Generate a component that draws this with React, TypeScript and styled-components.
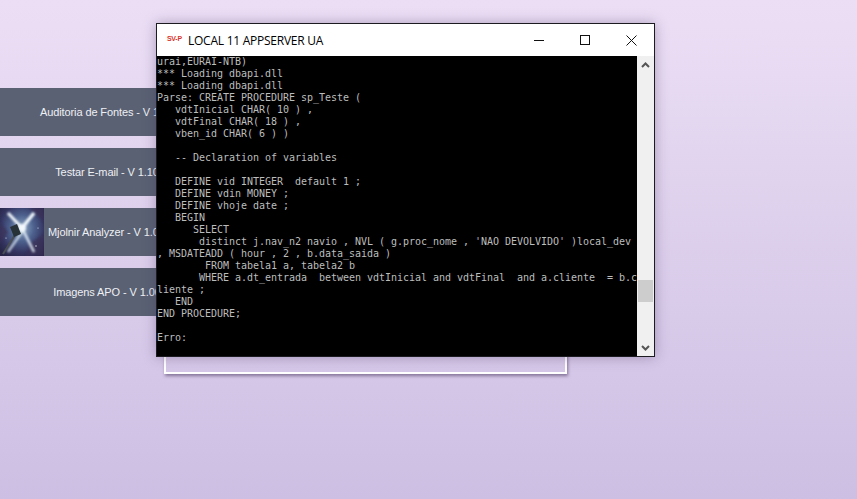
import React from "react";
import styled, { createGlobalStyle } from "styled-components";

const Global = createGlobalStyle`
  html, body { margin: 0; padding: 0; height: 100%; }
  body {
    min-height: 499px;
    overflow: hidden;
    background: linear-gradient(180deg, #ecdff5 0%, #e2d5ef 30%, #cdbfe3 100%);
    font-family: "Liberation Sans", Arial, sans-serif;
  }
`;

const Page = styled.div`
  position: relative;
  width: 857px;
  height: 499px;
  overflow: hidden;
`;

const Menu = styled.nav`
  display: flex;
  flex-direction: column;
  gap: 12px;
  padding-top: 88px;
  width: 214px;
`;

const MenuButton = styled.div`
  display: flex;
  align-items: center;
  justify-content: center;
  height: 48px;
  background: #5a6173;
  color: #eef0f4;
  font-size: 11px;
  letter-spacing: -0.1px;
  white-space: nowrap;
`;

const IconMenuButton = styled(MenuButton)`
  justify-content: flex-start;
  gap: 4px;
`;

const Backdrop = styled.div`
  position: absolute;
  left: 164px;
  top: 300px;
  width: 399px;
  height: 72px;
  border: 2px solid #fff;
  border-top: 0;
  box-shadow: 1px 2px 3px rgba(70, 50, 90, 0.55);
`;

const Win = styled.section`
  position: absolute;
  left: 156px;
  top: 23px;
  width: 497px;
  height: 332px;
  display: flex;
  flex-direction: column;
  border: 1px solid #1c1c20;
  background: #fff;
  box-shadow: 0 0 12px rgba(60, 40, 90, 0.35);
`;

const TitleBar = styled.header`
  display: flex;
  align-items: center;
  height: 32px;
  flex: none;
  padding-left: 10px;
  background: #fff;
`;

const Logo = styled.span`
  width: 16px;
  margin-right: 5px;
  margin-top: -4px;
  color: #d9342b;
  font-size: 7px;
  font-weight: 700;
  letter-spacing: -0.3px;
  white-space: nowrap;
`;

const Title = styled.h1`
  flex: 1;
  margin: 0;
  font-family: "Open Sans", "Noto Sans", sans-serif;
  font-size: 12px;
  font-weight: 400;
  letter-spacing: -0.25px;
  color: #000;
`;

const WinButton = styled.button`
  width: 46px;
  height: 32px;
  padding: 0;
  border: 0;
  background: transparent;
  display: flex;
  align-items: center;
  justify-content: center;
`;

const Body = styled.div`
  flex: 1;
  display: flex;
  min-height: 0;
`;

const Consoleout = styled.pre`
  flex: 1;
  margin: 0;
  padding: 0;
  background: #000;
  color: #bdbdbd;
  font-family: "DejaVu Sans Mono", "Liberation Mono", monospace;
  font-size: 10px;
  letter-spacing: -0.02px;
  line-height: 12px;
  overflow: hidden;
  white-space: pre;
`;

const Scroll = styled.div`
  flex: none;
  width: 17px;
  display: flex;
  flex-direction: column;
  background: #f0f0f0;
`;

const Arrow = styled.div`
  flex: none;
  height: 17px;
  display: flex;
  align-items: center;
  justify-content: center;
`;

const Track = styled.div`
  flex: 1;
  display: flex;
  flex-direction: column;
  justify-content: flex-end;
  padding-bottom: 37px;
`;

const Thumb = styled.div`
  height: 22px;
  margin: 0 1px;
  background: #cdcdcd;
`;

const lines = `urai,EURAI-NTB)
*** Loading dbapi.dll
*** Loading dbapi.dll
Parse: CREATE PROCEDURE sp_Teste (
   vdtInicial CHAR( 10 ) ,
   vdtFinal CHAR( 18 ) ,
   vben_id CHAR( 6 ) )

   -- Declaration of variables

   DEFINE vid INTEGER  default 1 ;
   DEFINE vdin MONEY ;
   DEFINE vhoje date ;
   BEGIN
      SELECT
       distinct j.nav_n2 navio , NVL ( g.proc_nome , 'NAO DEVOLVIDO' )local_dev
, MSDATEADD ( hour , 2 , b.data_saida )
        FROM tabela1 a, tabela2 b
       WHERE a.dt_entrada  between vdtInicial and vdtFinal  and a.cliente  = b.c
liente ;
   END
END PROCEDURE;

Erro:`;

const Hammer = () => (
  <svg width="44" height="48" viewBox="0 0 44 48" style={{ flex: "none" }}>
    <defs>
      <radialGradient id="neb" cx="50%" cy="42%" r="68%">
        <stop offset="0%" stopColor="#8fa9c4" />
        <stop offset="40%" stopColor="#4d618e" />
        <stop offset="75%" stopColor="#33345f" />
        <stop offset="100%" stopColor="#272446" />
      </radialGradient>
      <filter id="soft" x="-20%" y="-20%" width="140%" height="140%">
        <feGaussianBlur stdDeviation="1" />
      </filter>
    </defs>
    <rect width="44" height="48" fill="url(#neb)" />
    <path d="M32 34 L44 26 L44 48 L26 48 Z M30 0 L44 0 L44 14 Z M0 14 L8 24 L0 36 Z" fill="#3b3058" opacity=".7" filter="url(#soft)" />
    <g filter="url(#soft)">
      <path d="M22 20 L34 5" stroke="#f2f8fc" strokeWidth="3.6" />
      <path d="M8 5 L22 20" stroke="#f2f8fc" strokeWidth="3" />
      <path d="M22 20 L34 44" stroke="#e6f0f8" strokeWidth="2.6" opacity=".85" />
      <path d="M22 24 L8 44" stroke="#dbe8f2" strokeWidth="2.4" opacity=".8" />
      <circle cx="22" cy="20" r="4" fill="#f2f8fc" />
    </g>
    <path d="M3 46 L15 27" stroke="#4a4f54" strokeWidth="2" />
    <path d="M10 19 L17 16 L21 26 L14 29 Z" fill="#273238" />
    <g fill="#dfe8f2">
      <circle cx="36" cy="38" r=".7" />
      <circle cx="6" cy="30" r=".6" />
      <circle cx="38" cy="20" r=".6" />
    </g>
  </svg>
);

export default function App() {
  return (
    <Page>
      <Global />
      <Menu>
        <MenuButton>Auditoria de Fontes - V 1.10</MenuButton>
        <MenuButton>Testar E-mail - V 1.10</MenuButton>
        <IconMenuButton>
          <Hammer />
          Mjolnir Analyzer - V 1.00
        </IconMenuButton>
        <MenuButton>Imagens APO - V 1.00</MenuButton>
      </Menu>
      <Backdrop />
      <Win>
        <TitleBar>
          <Logo>SV-P</Logo>
          <Title>LOCAL 11 APPSERVER UA</Title>
          <WinButton aria-label="minimize">
            <svg width="10" height="10" viewBox="0 0 10 10"><path d="M0 5.5H10" stroke="#111" /></svg>
          </WinButton>
          <WinButton aria-label="maximize">
            <svg width="10" height="10" viewBox="0 0 10 10"><rect x=".5" y=".5" width="9" height="9" fill="none" stroke="#111" /></svg>
          </WinButton>
          <WinButton aria-label="close">
            <svg width="11" height="11" viewBox="0 0 11 11"><path d="M.5 .5L10.5 10.5M10.5 .5L.5 10.5" stroke="#111" /></svg>
          </WinButton>
        </TitleBar>
        <Body>
          <Consoleout>{lines}</Consoleout>
          <Scroll>
            <Arrow>
              <svg width="9" height="6" viewBox="0 0 9 6"><path d="M1 5L4.5 1.5L8 5" fill="none" stroke="#555" strokeWidth="2" /></svg>
            </Arrow>
            <Track><Thumb /></Track>
            <Arrow>
              <svg width="9" height="6" viewBox="0 0 9 6"><path d="M1 1L4.5 4.5L8 1" fill="none" stroke="#555" strokeWidth="2" /></svg>
            </Arrow>
          </Scroll>
        </Body>
      </Win>
    </Page>
  );
}
